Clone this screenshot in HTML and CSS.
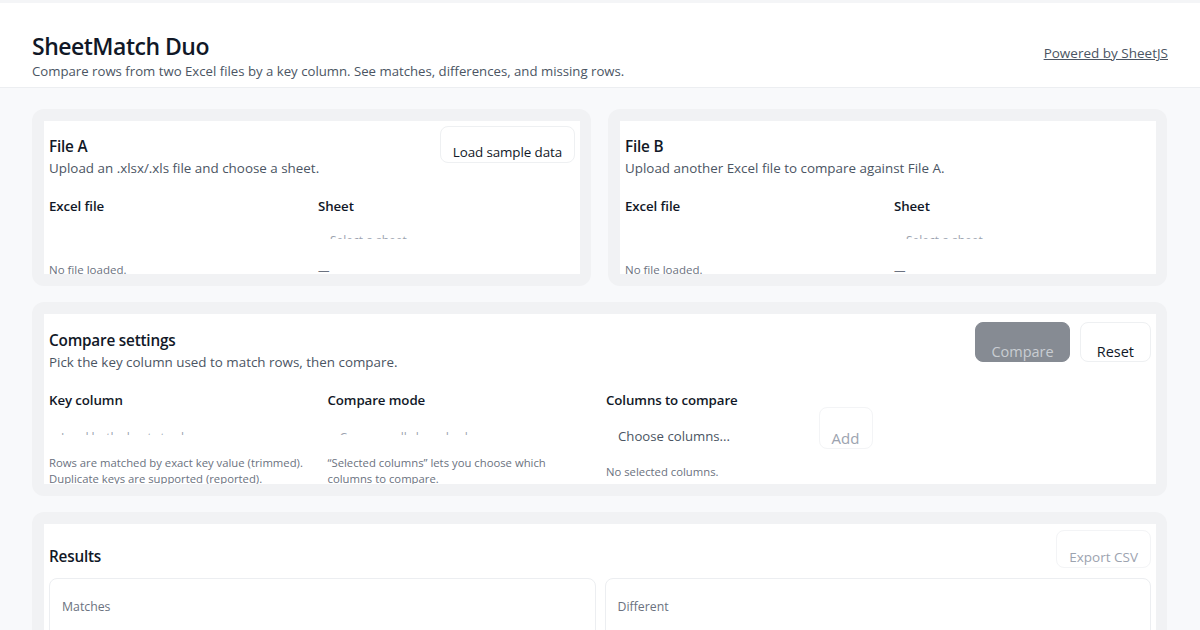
FILE: index.html
```html
<!DOCTYPE html>
<html lang="en">
<head>
<meta charset="utf-8">
<title>SheetMatch Duo</title>
<link rel="stylesheet" href="styles.css">
</head>
<body>
<header class="top">
  <div class="brand">
    <h1 class="app-title">SheetMatch Duo</h1>
    <p class="app-sub">Compare rows from two Excel files by a key column. See matches, differences, and missing rows.</p>
  </div>
  <a class="powered" href="#">Powered by SheetJS</a>
</header>
<main class="main">
  <div class="files">
    <section class="card">
      <div class="inner inner-file">
        <div class="head">
          <div class="head-text">
            <h2 class="card-title">File A</h2>
            <p class="card-desc">Upload an .xlsx/.xls file and choose a sheet.</p>
          </div>
          <button class="btn btn-sample">Load sample data</button>
        </div>
        <div class="fields2">
          <div class="field">
            <div class="label">Excel file</div>
            <div class="sel sel-empty"></div>
            <div class="note">No file loaded.</div>
          </div>
          <div class="field">
            <div class="label">Sheet</div>
            <div class="sel">Select a sheet</div>
            <div class="note">—</div>
          </div>
        </div>
      </div>
    </section>
    <section class="card">
      <div class="inner inner-file">
        <div class="head">
          <div class="head-text">
            <h2 class="card-title">File B</h2>
            <p class="card-desc">Upload another Excel file to compare against File A.</p>
          </div>
        </div>
        <div class="fields2">
          <div class="field">
            <div class="label">Excel file</div>
            <div class="sel sel-empty"></div>
            <div class="note">No file loaded.</div>
          </div>
          <div class="field">
            <div class="label">Sheet</div>
            <div class="sel">Select a sheet</div>
            <div class="note">—</div>
          </div>
        </div>
      </div>
    </section>
  </div>

  <section class="card">
    <div class="inner inner-settings">
      <div class="head">
        <div class="head-text head-text-settings">
          <h2 class="card-title">Compare settings</h2>
          <p class="card-desc">Pick the key column used to match rows, then compare.</p>
        </div>
        <div class="actions">
          <button class="btn btn-primary" disabled>Compare</button>
          <button class="btn btn-reset">Reset</button>
        </div>
      </div>
      <div class="fields4">
        <div class="field">
          <div class="label">Key column</div>
          <div class="sel sel-key">Load both sheets to choose</div>
          <div class="help">Rows are matched by exact key value (trimmed).<br>Duplicate keys are supported (reported).</div>
        </div>
        <div class="field">
          <div class="label">Compare mode</div>
          <div class="sel sel-key">Compare all shared columns</div>
          <div class="help">“Selected columns” lets you choose which<br>columns to compare.</div>
        </div>
        <div class="field field-cols">
          <div class="label">Columns to compare</div>
          <div class="cols-row">
            <div class="cols-input">Choose columns...</div>
            <button class="btn btn-add" disabled>Add</button>
          </div>
          <div class="note note-cols">No selected columns.</div>
        </div>
      </div>
    </div>
  </section>

  <section class="card">
    <div class="inner inner-results">
      <div class="head">
        <h2 class="card-title results-title">Results</h2>
        <button class="btn btn-export" disabled>Export CSV</button>
      </div>
      <div class="stats">
        <div class="stat"><div class="stat-label">Matches</div></div>
        <div class="stat"><div class="stat-label">Different</div></div>
      </div>
    </div>
  </section>
</main>
</body>
</html>
```

FILE: styles.css
```css
* { box-sizing: border-box; }

html, body {
  margin: 0;
  height: 630px;
  overflow: hidden;
}

body {
  font-family: "Open Sans", "Noto Sans", sans-serif;
  background: #f8f9fb;
  color: #111827;
}

.top {
  background: #ffffff;
  border-top: 3px solid #f4f5f7;
  border-bottom: 1px solid #eceef1;
  height: 88px;
  padding: 28px 32px 0 32px;
  display: flex;
  justify-content: space-between;
  align-items: flex-start;
}

.app-title {
  margin: 0;
  font-size: 23px;
  line-height: 30px;
  font-weight: 600;
  letter-spacing: -0.5px;
  color: #111827;
}

.app-sub {
  margin: 1px 0 0;
  font-size: 13.2px;
  line-height: 18px;
  color: #4b5563;
}

.powered {
  margin-top: 13px;
  font-size: 13.5px;
  line-height: 18px;
  color: #4b5563;
  text-decoration: underline;
}

.main {
  padding: 21px 33px 0 32px;
  display: flex;
  flex-direction: column;
  gap: 16px;
}

.files {
  display: grid;
  grid-template-columns: 1fr 1fr;
  gap: 17px;
}

.card {
  background: #f1f2f4;
  border-radius: 12px;
  padding: 12px 11px 12px 12px;
}

.inner {
  background: #ffffff;
  padding: 5px;
  overflow: hidden;
}

.inner-file { height: 153px; }
.inner-settings { height: 170px; }
.inner-results { height: 200px; }

.head {
  display: flex;
  justify-content: space-between;
  align-items: flex-start;
}

.head-text { padding-top: 10px; }
.head-text-settings { padding-top: 11px; }

.card-title {
  margin: 0;
  font-size: 15.3px;
  line-height: 20px;
  font-weight: 600;
  color: #111827;
  letter-spacing: -0.2px;
}

.card-desc {
  margin: 3px 0 0;
  font-size: 13.4px;
  line-height: 18px;
  color: #4b5563;
}

.btn {
  font-family: inherit;
  background: #ffffff;
  border: 1px solid #eef0f2;
  border-radius: 8px;
  color: #111827;
  cursor: pointer;
}

.btn-sample {
  height: 37px;
  padding: 15px 12px 0;
  font-size: 13.4px;
  line-height: 18px;
  letter-spacing: -0.1px;
}

.actions {
  display: flex;
  gap: 10px;
  margin-top: 3px;
}

.btn-primary {
  height: 40px;
  padding: 19px 15px 0;
  background: #868b93;
  border-color: #868b93;
  color: #c9cdd2;
  font-size: 14.5px;
  line-height: 18px;
}

.btn-reset {
  height: 40px;
  padding: 19px 16px 0;
  font-size: 14.5px;
  line-height: 18px;
}

.fields2 {
  display: grid;
  grid-template-columns: 1fr 1fr;
  gap: 12px;
  margin-top: 20px;
}

.fields4 {
  display: grid;
  grid-template-columns: repeat(4, 1fr);
  gap: 12px;
  margin-top: 20px;
}

.label {
  font-size: 13.3px;
  line-height: 18px;
  font-weight: 600;
  color: #111827;
  letter-spacing: -0.1px;
}

.sel {
  height: 18px;
  margin-top: 6px;
  overflow: hidden;
  padding: 12px 12px 0;
  font-size: 12px;
  line-height: 16px;
  color: #9ca3af;
}

.sel-key {
  height: 20px;
  padding-top: 15px;
}

.note {
  margin-top: 23px;
  font-size: 11.5px;
  line-height: 16px;
  color: #6b7280;
}

.help {
  margin-top: 20px;
  font-size: 11.3px;
  line-height: 16px;
  color: #6b7280;
}

.cols-row {
  display: flex;
  align-items: flex-start;
  gap: 8px;
  margin-top: -2px;
  height: 42px;
}

.cols-input {
  flex: 1;
  padding: 20px 12px 0;
  font-size: 13.2px;
  line-height: 18px;
  color: #4b5563;
}

.btn-add {
  height: 42px;
  width: 54px;
  padding: 20px 0 0;
  font-size: 15px;
  line-height: 18px;
  color: #9ca3af;
  border-color: #f3f4f6;
}

.note-cols { margin-top: 15px; font-size: 11.3px; }

.results-title { margin-top: 17px; }

.btn-export {
  height: 38px;
  margin-top: 1px;
  padding: 15px 12px 0;
  font-size: 13.5px;
  line-height: 18px;
  color: #9ca3af;
  border-color: #f3f4f6;
}

.stats {
  display: grid;
  grid-template-columns: 1fr 1fr;
  gap: 9px;
  margin-top: 10px;
}

.stat {
  border: 1px solid #eceef1;
  border-radius: 8px;
  height: 120px;
  padding: 20px 12px 0;
}

.stat-label {
  font-size: 12.3px;
  line-height: 16px;
  color: #6b7280;
}
```
